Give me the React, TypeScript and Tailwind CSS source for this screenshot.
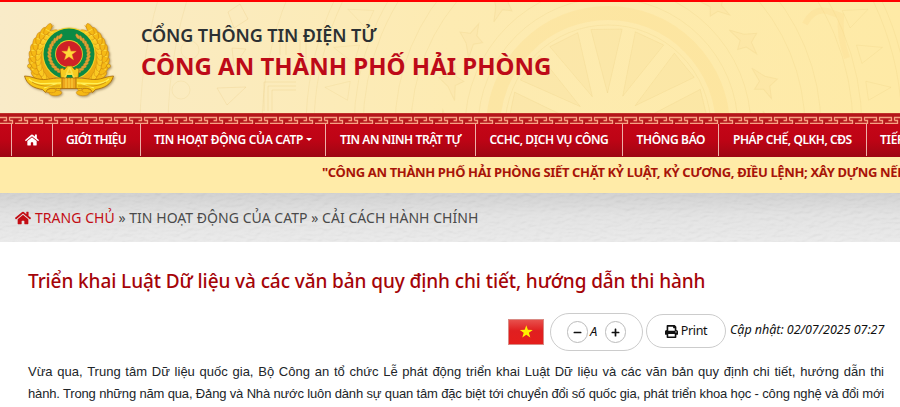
import React from "react";
import { FaHome, FaMinus, FaPlus, FaPrint } from "react-icons/fa";

const navItems = [
  { label: "GIỚI THIỆU", box: "w-[88px] pl-[13px]", text: "tracking-[-0.65px]" },
  { label: "TIN HOẠT ĐỘNG CỦA CATP", box: "w-[185px] pl-[13px]", text: "tracking-[-0.3px]", caret: true },
  { label: "TIN AN NINH TRẬT TỰ", box: "w-[150px] pl-[14px]", text: "tracking-[-0.4px]" },
  { label: "CCHC, DỊCH VỤ CÔNG", box: "w-[147px] pl-[13.5px]", text: "tracking-[-0.4px]" },
  { label: "THÔNG BÁO", box: "w-[96px] pl-[13.5px]", text: "tracking-[-0.35px]" },
  { label: "PHÁP CHẾ, QLKH, CĐS", box: "w-[148px] pl-[14px]", text: "tracking-[-0.45px]" },
  { label: "TIẾP DÂN", box: "w-[100px] pl-[13px]", text: "tracking-[-0.3px]" },
];

function polar(cx: number, cy: number, r: number, deg: number): [number, number] {
  const a = (deg * Math.PI) / 180;
  return [cx + r * Math.cos(a), cy + r * Math.sin(a)];
}

function starPoints(cx: number, cy: number, r: number) {
  return Array.from({ length: 10 }, (_, i) =>
    polar(cx, cy, i % 2 ? r * 0.4 : r, -90 + i * 36).map((n) => n.toFixed(2)).join(",")
  ).join(" ");
}

function Leaves() {
  const leaves = [];
  for (let i = 0; i < 13; i++) {
    const deg = 112 + i * 10.2;
    const [ox, oy] = polar(45, 37, 36.5, deg);
    const [ix, iy] = polar(45, 37, 30.5, deg + 4);
    leaves.push(
      <g key={i}>
        <ellipse cx={ox} cy={oy} rx="6.4" ry="2.8" transform={`rotate(${deg + 66} ${ox} ${oy})`} fill="#f5b915" stroke="#c9800c" strokeWidth="0.5" />
        <ellipse cx={ix} cy={iy} rx="5.6" ry="2.6" transform={`rotate(${deg + 104} ${ix} ${iy})`} fill="#fbca22" stroke="#cf880e" strokeWidth="0.5" />
        <path d={`M${ox - 2} ${oy}L${ix} ${iy}`} stroke="#ffe64a" strokeWidth="0.8" />
      </g>
    );
  }
  return (
    <>
      <path d="M30 3C12 10 4 26 8 42c2 8 7 14 13 18l14-6C18 44 16 18 30 3z" fill="#eeac14" />
      {leaves}
      <circle cx="5.5" cy="44" r="2" fill="#f9c822" stroke="#b8740c" strokeWidth="0.5" />
    </>
  );
}

function Grain() {
  return (
    <>
      {Array.from({ length: 13 }, (_, i) => {
        const deg = 118 + i * 10.5;
        const [x, y] = polar(45, 32, 19.6, deg);
        return <ellipse key={i} cx={x} cy={y} rx="2.8" ry="1.4" transform={`rotate(${deg + 60} ${x} ${y})`} fill="#e3a033" stroke="#b9862c" strokeWidth="0.3" />;
      })}
    </>
  );
}

function Emblem() {
  return (
    <svg className="h-[74px] w-[92px] overflow-visible drop-shadow-[1px_1px_1px_rgba(90,60,10,0.5)]" viewBox="0 0 92 74">
      <Leaves />
      <g transform="translate(90 0) scale(-1 1)"><Leaves /></g>
      <circle cx="45" cy="32" r="26.6" fill="#f4d22c" />
      <circle cx="45" cy="32" r="25.5" fill="#0c8a45" />
      <Grain />
      <g transform="translate(90 0) scale(-1 1)"><Grain /></g>
      <circle cx="45" cy="32" r="15.4" fill="#0c8a45" />
      <circle cx="45" cy="32" r="13.9" fill="#f0c92b" />
      <circle cx="45" cy="32" r="13" fill="#cf2026" />
      <polygon points={starPoints(45, 31.6, 7.6)} fill="#ffd83a" stroke="#f7b32a" strokeWidth="0.4" />
      <path d="M36 47l3-1 1 2 2-2 1-2h5l1 2 2 2 1-2 3 1-1 9h-5v-4h-7v4h-5z" fill="#f7cb20" stroke="#9b6a08" strokeWidth="0.7" />
      <path d="M45.5 45l-5 12M45.5 45l5 12M42.5 52h6" stroke="#fbe048" strokeWidth="1.8" fill="none" />
      <path d="M.5 54c6 0 11 3 17 3.500s12-2 21-1.500v10.500c-8 0-11-1-15 1l-2 3-3-3C10 66 3 63 .5 54z" fill="#f8c818" stroke="#a96a08" strokeWidth="0.8" />
      <path d="M89.500 54c-6 0-11 3-17 3.500s-12-2-21-1.500v10.500c8 0 11-1 15 1l2 3 3-3c8.500-1.500 15.500-4.500 18-13.500z" fill="#f8c818" stroke="#a96a08" strokeWidth="0.8" />
      <path d="M5 57c7 6 15 5 32 4M85 57c-7 6-15 5-32 4M20 66l14-5M70 66l-14-5" stroke="#fff05a" strokeWidth="1.3" fill="none" />
      <path d="M8 60c8 5 15 4 28 4M82 60c-8 5-15 4-28 4" stroke="#c07c0a" strokeWidth="0.7" fill="none" />
      <rect x="38" y="56" width="14" height="10.5" fill="#eda61c" stroke="#a96a08" strokeWidth="0.8" />
      <path d="M42 56v10M45 56v10M48 56v10" stroke="#ffdf4a" strokeWidth="0.8" />
    </svg>
  );
}

function Drum() {
  const cx = 608;
  const cy = 128;
  const triangles = Array.from({ length: 14 }, (_, i) => {
    const a = 180 + i * (360 / 14) + 12;
    const p = [polar(cx, cy, 100, a - 9), polar(cx, cy, 100, a + 9), polar(cx, cy, 35, a)];
    return <polygon key={i} points={p.map((q) => q.join(",")).join(" ")} />;
  });
  const outer = Array.from({ length: 44 }, (_, i) => {
    const a = i * (360 / 44);
    const p = [polar(cx, cy, 262, a - 2.1), polar(cx, cy, 262, a + 2.1), polar(cx, cy, 286, a)];
    return <polygon key={i} points={p.map((q) => q.join(",")).join(" ")} />;
  });
  const birds = Array.from({ length: 22 }, (_, i) => {
    const a = i * (360 / 22);
    const [x, y] = polar(cx, cy, 163, a);
    return <path key={i} transform={`translate(${x} ${y}) rotate(${a + 80})`} d="M-18 5L-5-3 3-13 6-3 18 1 6 4 2 12-3 4z" />;
  });
  return (
    <svg className="h-full w-full" viewBox="0 2 900 111" preserveAspectRatio="none" fill="none" stroke="#dfb968">
      <g strokeOpacity="0.15">
        <circle cx={cx} cy={cy} r="115" stroke="#fbdc88" strokeWidth="14" strokeOpacity="0.3" />
        {[103, 130, 143, 197, 213, 245, 254, 294, 302, 346, 440, 468].map((r) => <circle key={r} cx={cx} cy={cy} r={r} />)}
        <g fill="#f3d58a" fillOpacity="0.14">{triangles}</g>
        {outer}
        <g fill="#f5d27c" fillOpacity="0.08">{birds}</g>
        <path d="M805 24q8-16 22-13l14 5q-2 20 6 42" stroke="#fad786" strokeWidth="6" strokeOpacity="0.25" />
        <path d="M217 88l29-1-19 18zM228 12l12-8 8 15-14 9zM232 48l14 1-12 17zM264 111V82h32M268 111V86h28M272 111V90h24M280 55V33h26v28M286 55V40h14v18" strokeOpacity="0.2" />
        <circle cx="190" cy="50" r="9" />
        <circle cx="181" cy="90" r="9" />
      </g>
    </svg>
  );
}

function Meander() {
  return (
    <svg className="block h-[11px] w-full" width="900" height="11">
      <defs>
        <pattern id="meander" width="15" height="11" patternUnits="userSpaceOnUse">
          <rect width="15" height="11" fill="#b5151a" />
          <rect width="15" height="1" fill="#c0322c" />
          <path d="M0 4.5h6.5v3H3.5M0 10.4h12.5V7.500H9.500M15 4.500H9.500v3" stroke="#f7a283" strokeWidth="1.3" fill="none" />
        </pattern>
      </defs>
      <rect width="900" height="11" fill="url(#meander)" />
    </svg>
  );
}

function Header() {
  return (
    <header className="grid h-[113px] border-t-2 border-[#ff0000] bg-linear-to-r from-[#f9ebc8] via-[#fdebb2] to-[#feeaa6]">
      <div className="col-start-1 row-start-1 h-[111px]"><Drum /></div>
      <div className="relative col-start-1 row-start-1 flex pl-6 pt-5">
        <Emblem />
        <div className="ml-[25px] flex flex-col font-['Noto_Sans',sans-serif] whitespace-nowrap">
          <div className="h-[27px] text-[18px] leading-[27px] font-semibold tracking-[-0.1px] text-[#2b3033]">CỔNG THÔNG TIN ĐIỆN TỬ</div>
          <div className="text-[24px] leading-[33px] font-bold text-[#bd0a18]">CÔNG AN THÀNH PHỐ HẢI PHÒNG</div>
        </div>
      </div>
    </header>
  );
}

function Nav() {
  return (
    <nav className="flex h-[33px] overflow-hidden bg-linear-to-b from-[#c50517] via-[#bd0415] to-[#9e0613] pl-[11px] text-[12px] font-semibold whitespace-nowrap text-white">
      <div className="flex h-8 w-[41px] shrink-0 items-center justify-center border-l border-[#eeb0a8] pb-px"><FaHome size={14} /></div>
      {navItems.map((item) => (
        <div key={item.label} className={`flex h-8 shrink-0 items-center border-l border-[#eeb0a8] pb-px ${item.box}`}>
          <span className={item.text}>{item.label}</span>
          {item.caret && <span className="ml-[3px] border-x-[3px] border-t-[3px] border-x-transparent border-t-white" />}
        </div>
      ))}
    </nav>
  );
}

function Breadcrumb() {
  return (
    <div className="grid h-[49px] bg-linear-to-b from-[#cfcfcf] via-[#e2e2e2] via-45% to-[#eaeaea]">
      <svg className="col-start-1 row-start-1 h-[49px] w-full opacity-[0.08]" width="900" height="49">
        <filter id="paper">
          <feTurbulence type="fractalNoise" baseFrequency="0.13 0.3" numOctaves="2" seed="4" />
          <feDiffuseLighting surfaceScale="2" lightingColor="#ffffff"><feDistantLight azimuth="240" elevation="55" /></feDiffuseLighting>
        </filter>
        <rect width="900" height="49" filter="url(#paper)" />
      </svg>
      <div className="relative col-start-1 row-start-1 flex items-center pl-[15px] text-[14px] whitespace-nowrap text-[#4a4a4a]">
        <FaHome size={16} className="mr-1 text-[#c30d14]" />
        <span className="tracking-[0.04px]"><span className="text-[#c30d14]">TRANG CHỦ</span> » TIN HOẠT ĐỘNG CỦA CATP » CẢI CÁCH HÀNH CHÍNH</span>
      </div>
    </div>
  );
}

export default function App() {
  return (
    <div className="h-[407px] w-[900px] overflow-hidden bg-white font-['Noto_Sans',sans-serif]">
      <Header />
      <Meander />
      <Nav />
      <div className="h-9 overflow-hidden bg-[#ffeba8] pl-[322px] pt-[5px] text-[13px] leading-5 font-bold tracking-[-0.36px] whitespace-nowrap text-[#a81408]">
        "CÔNG AN THÀNH PHỐ HẢI PHÒNG SIẾT CHẶT KỶ LUẬT, KỶ CƯƠNG, ĐIỀU LỆNH; XÂY DỰNG NẾP SỐNG
      </div>
      <Breadcrumb />
      <main className="px-7 pt-6">
        <h1 className="h-[29px] text-[19px] leading-[30px] font-medium tracking-[-0.095px] whitespace-nowrap text-[#a50408]">Triển khai Luật Dữ liệu và các văn bản quy định chi tiết, hướng dẫn thi hành</h1>
        <div className="mt-[18px] flex h-[37px] text-[12.5px] text-[#101010]">
          <svg className="mt-[6px] ml-[480px] h-[26px] w-[36px] shrink-0" viewBox="0 0 36 26">
            <defs>
              <linearGradient id="flag" x1="0" y1="0" x2="0" y2="1"><stop offset="0" stopColor="#e8524e" /><stop offset=".45" stopColor="#e01f20" /><stop offset="1" stopColor="#e51d1b" /></linearGradient>
            </defs>
            <rect x=".5" y=".5" width="35" height="25" fill="url(#flag)" stroke="#d98a84" />
            <polygon points={starPoints(18.3, 13, 6.8)} fill="#fff000" />
          </svg>
          <div className="ml-[6px] flex h-[38px] w-[93px] shrink-0 items-center justify-center rounded-full border border-[#cccccc]">
            <span className="flex h-[22px] w-[21px] items-center justify-center rounded-full border border-[#bbbbbb]"><FaMinus size={9} /></span>
            <span className="w-[17px] pl-[2px] text-[13px] italic">A</span>
            <span className="flex h-[22px] w-[21px] items-center justify-center rounded-full border border-[#bbbbbb]"><FaPlus size={9} /></span>
          </div>
          <div className="mt-px ml-[3px] flex h-[34px] w-[80px] shrink-0 items-center justify-center gap-[3px] rounded-full border border-[#cccccc]"><FaPrint size={13} /><span className="tracking-[-0.3px]">Print</span></div>
          <span className="mt-[7px] ml-[4px] text-[12.5px] leading-5 tracking-[-0.03px] whitespace-nowrap italic">Cập nhật: 02/07/2025 07:27</span>
        </div>
        <div className="mt-[11px] w-[856px] font-['Liberation_Sans',sans-serif] text-[13px] leading-[22px] text-[#212529]">
          <p className="[text-align-last:justify] whitespace-nowrap">Vừa qua, Trung tâm Dữ liệu quốc gia, Bộ Công an tổ chức Lễ phát động triển khai Luật Dữ liệu và các văn bản quy định chi tiết, hướng dẫn thi</p>
          <p className="tracking-[-0.16px] [text-align-last:justify] whitespace-nowrap">hành. Trong những năm qua, Đảng và Nhà nước luôn dành sự quan tâm đặc biệt tới chuyển đổi số quốc gia, phát triển khoa học - công nghệ và đổi mới</p>
        </div>
      </main>
    </div>
  );
}
